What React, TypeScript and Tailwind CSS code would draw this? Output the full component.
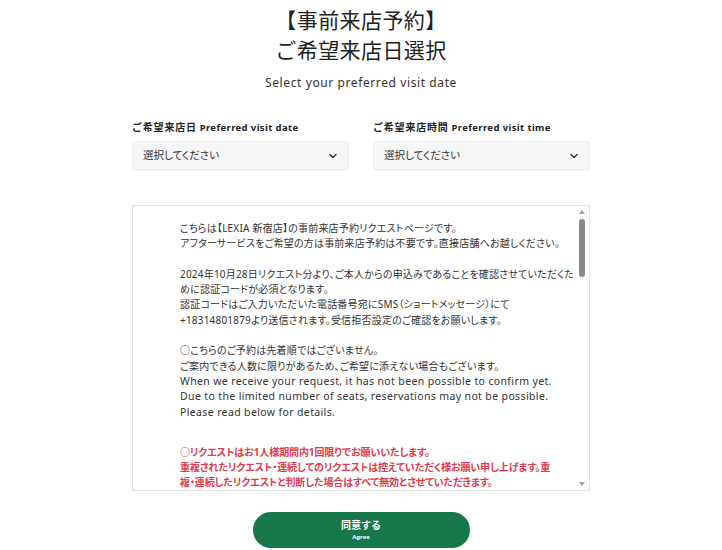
import React from "react";

function Chevron() {
  return (
    <svg width="10" height="10" viewBox="0 0 10 10" fill="none">
      <path d="M2 3.5 L5 6.5 L8 3.5" stroke="#333" strokeWidth="1.4" strokeLinecap="round" strokeLinejoin="round" />
    </svg>
  );
}

function Field({ ja, en }: { ja: string; en: string }) {
  return (
    <div className="flex flex-col w-[217px]">
      <div className="text-[10px] font-bold text-[#222] tracking-[0.02em] leading-[14px] mt-[2px] mb-[6px] whitespace-nowrap">
        <span className="tracking-[0.08em]">{ja}</span> <span className="text-[9.5px] tracking-[0.04em]">{en}</span>
      </div>
      <div className="h-[29px] bg-[#f6f6f6] border border-[#ececec] rounded-[3px] flex items-center justify-between pl-[10px] pr-[10px] shadow-[0_1px_1px_rgba(0,0,0,0.04)]">
        <span className="text-[10.5px] text-[#333] [font-feature-settings:'palt']">選択してください</span>
        <Chevron />
      </div>
    </div>
  );
}

export default function App() {
  return (
    <div
      className="w-[722px] h-[550px] bg-white flex flex-col items-center overflow-hidden"
      style={{ fontFamily: '"Noto Sans", "Noto Sans CJK JP", sans-serif' }}
    >
      <div className="mt-[5px] text-[21px] leading-[30px] text-[#222] text-center tracking-[0.02em]">
        <div>【事前来店予約】</div>
        <div>ご希望来店日選択</div>
      </div>
      <div className="mt-[9px] text-[12px] text-[#333] tracking-[0.05em] leading-[18px]">
        Select your preferred visit date
      </div>
      <div className="mt-[26px] flex gap-[24px] w-[458px]">
        <Field ja="ご希望来店日" en="Preferred visit date" />
        <Field ja="ご希望来店時間" en="Preferred visit time" />
      </div>
      <div className="relative mt-[35px] w-[458px] h-[286px] border border-[#e2e2e2] overflow-hidden">
        <div className="pl-[47px] pr-[20px] pt-[15px] text-[10px] leading-[15.3px] text-[#333] tracking-[0.02em] whitespace-nowrap [font-feature-settings:'palt']">
          <p>こちらは【LEXIA 新宿店】の事前来店予約リクエストページです。</p>
          <p>アフターサービスをご希望の方は事前来店予約は不要です。直接店舗へお越しください。</p>
          <p>&nbsp;</p>
          <p>2024年10月28日リクエスト分より、ご本人からの申込みであることを確認させていただくた</p>
          <p>めに認証コードが必須となります。</p>
          <p>認証コードはご入力いただいた電話番号宛にSMS（ショートメッセージ）にて</p>
          <p>+18314801879より送信されます。受信拒否設定のご確認をお願いします。</p>
          <p>&nbsp;</p>
          <p>○こちらのご予約は先着順ではございません。</p>
          <p>ご案内できる人数に限りがあるため、ご希望に添えない場合もございます。</p>
          <p className="text-[10.5px] tracking-[0.035em]">When we receive your request, it has not been possible to confirm yet.</p>
          <p className="text-[10.5px] tracking-[0.035em]">Due to the limited number of seats, reservations may not be possible.</p>
          <p className="text-[10.5px] tracking-[0.035em]">Please read below for details.</p>
          <div className="h-[25px]" />
          <div className="text-[#e23a4c] font-bold tracking-[-0.01em]">
            <p>○リクエストはお1人様期間内1回限りでお願いいたします。</p>
            <p>重複されたリクエスト・連続してのリクエストは控えていただく様お願い申し上げます。重</p>
            <p>複・連続したリクエストと判断した場合はすべて無効とさせていただきます。</p>
          </div>
        </div>
        <div className="absolute right-0 top-0 bottom-0 w-[14px] bg-white flex flex-col items-center">
          <div className="mt-[4px] w-0 h-0 border-l-[3px] border-r-[3px] border-b-[4px] border-l-transparent border-r-transparent border-b-[#a0a0a0]" />
          <div className="mt-[5px] w-[6px] h-[58px] rounded-full bg-[#8a8a8a]" />
          <div className="flex-1" />
          <div className="mb-[4px] w-0 h-0 border-l-[3px] border-r-[3px] border-t-[4px] border-l-transparent border-r-transparent border-t-[#a0a0a0]" />
        </div>
      </div>
      <button className="mt-[21px] w-[217px] h-[36px] rounded-full bg-[#17774a] text-white flex flex-col items-center justify-start pt-[7px]">
        <span className="text-[10px] font-bold leading-[12px]">同意する</span>
        <span className="text-[6px] font-bold leading-[8px] mt-[2px]">Agree</span>
      </button>
    </div>
  );
}
